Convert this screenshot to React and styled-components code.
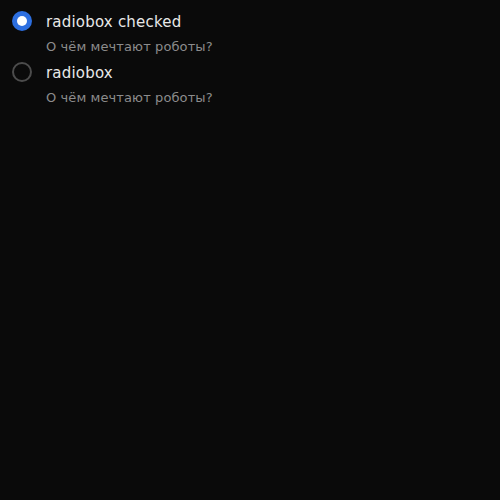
import React from "react";
import styled, { createGlobalStyle } from "styled-components";

const GlobalStyle = createGlobalStyle`
  html, body {
    margin: 0;
    padding: 0;
    background: #0a0a0a;
  }
  body {
    font-family: "DejaVu Sans", "Verdana", sans-serif;
  }
`;

const Page = styled.div`
  width: 500px;
  height: 500px;
  box-sizing: border-box;
  padding: 11px 12px;
  background: #0a0a0a;
  display: flex;
  flex-direction: column;
  gap: 5px;
`;

const Item = styled.label`
  display: grid;
  grid-template-columns: 20px 1fr;
  column-gap: 14px;
  row-gap: 4px;
  cursor: pointer;
`;

const Radio = styled.span`
  width: 20px;
  height: 20px;
  box-sizing: border-box;
  border-radius: 50%;
  display: flex;
  align-items: center;
  justify-content: center;
  background: ${(p) => (p.checked ? "#2d6fe0" : "transparent")};
  border: ${(p) => (p.checked ? "none" : "2px solid #4c4c4c")};

  &::after {
    content: "";
    display: ${(p) => (p.checked ? "block" : "none")};
    width: 10px;
    height: 10px;
    border-radius: 50%;
    background: #ffffff;
  }
`;

const Title = styled.span`
  font-size: 15px;
  letter-spacing: 0.2px;
  line-height: 20px;
  padding-top: 1px;
  color: #e8e8e8;
`;

const Caption = styled.span`
  grid-column: 2;
  font-size: 13px;
  letter-spacing: 0.1px;
  line-height: 20px;
  padding-top: 1px;
  color: #8c8c8c;
`;

const items = [
  { title: "radiobox checked", checked: true },
  { title: "radiobox", checked: false },
];

export default function App() {
  return (
    <>
      <GlobalStyle />
      <Page>
        {items.map((it) => (
          <Item key={it.title}>
            <Radio checked={it.checked} />
            <Title>{it.title}</Title>
            <Caption>О чём мечтают роботы?</Caption>
          </Item>
        ))}
      </Page>
    </>
  );
}
